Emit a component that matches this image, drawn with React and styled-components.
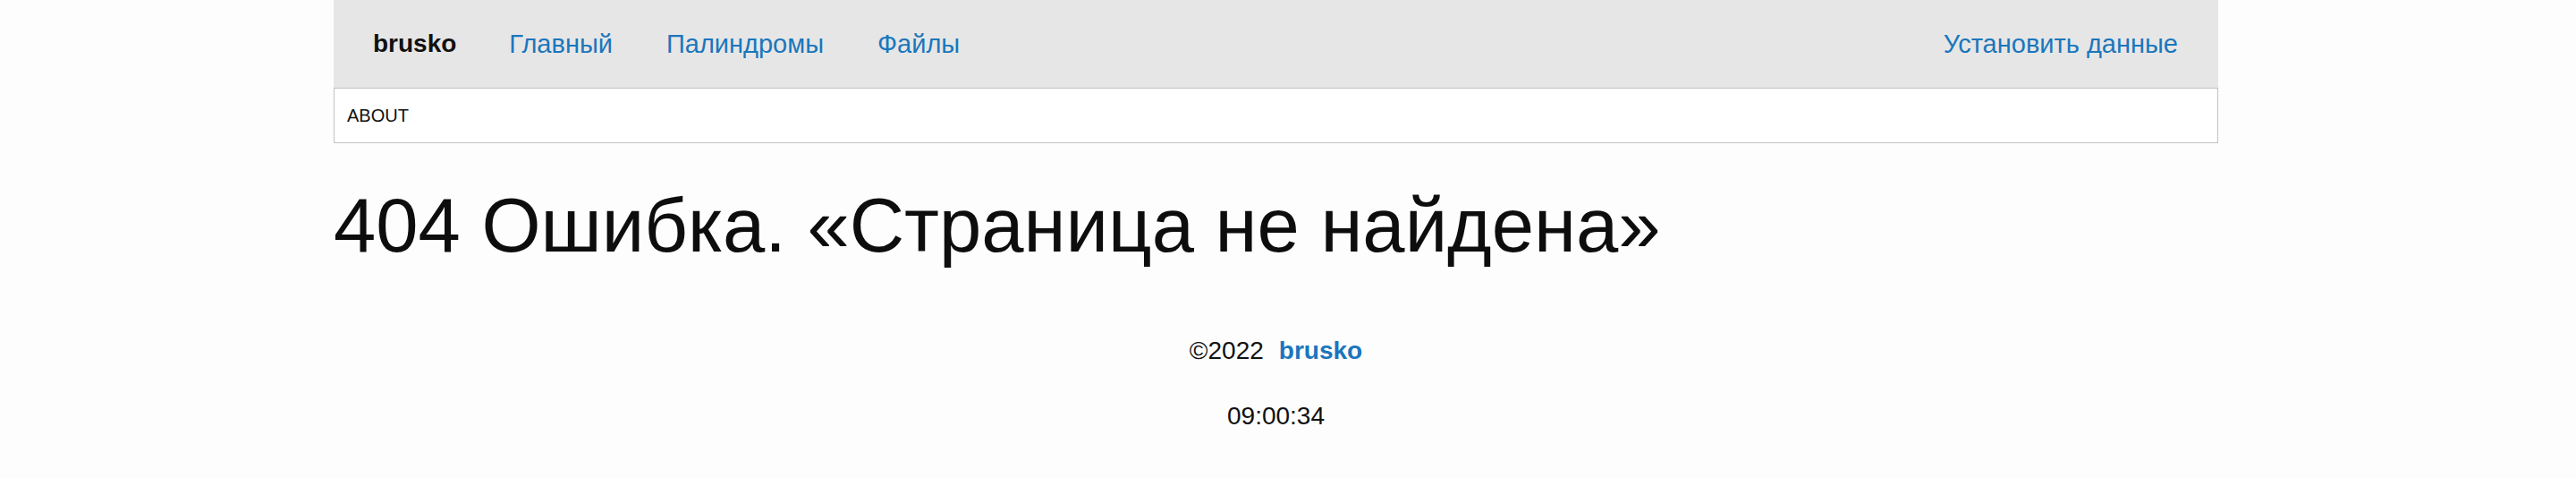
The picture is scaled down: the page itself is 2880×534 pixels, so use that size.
import React from "react";
import styled, { createGlobalStyle } from "styled-components";

const GlobalStyle = createGlobalStyle`
    body {
        margin: 0;
        background: #fdfdfd;
        font-family: "Liberation Sans", Arial, sans-serif;
        color: #111;
    }
`

const Page = styled.div`
    width: 2107px;
    margin-left: 373px;
`
const Navbar = styled.nav`
    height: 98px;
    background: #e6e6e6;
    display: flex;
    align-items: center;
    padding: 0 45px 0 44px;
    box-sizing: border-box;
`
const Brand = styled.a`
    font-size: 28px;
    font-weight: bold;
    color: #111;
    text-decoration: none;
    margin-right: 59px;
`
const NavLink = styled.a`
    font-size: 29px;
    color: #1b76bc;
    text-decoration: none;
    margin-right: ${p => (p.$last ? "0" : "60px")};
    margin-left: ${p => (p.$right ? "auto" : "0")};
`
const SubBar = styled.div`
    height: 62px;
    box-sizing: border-box;
    border: 1px solid #c2c2c2;
    background: #fff;
    display: flex;
    align-items: center;
    padding-left: 14px;
    font-size: 20px;
    text-transform: uppercase;
`
const Title = styled.h1`
    margin: 49px 0 0 0;
    font-size: 85px;
    line-height: 86px;
    font-weight: normal;
    color: #0d0d0d;
`
const Footer = styled.footer`
    margin-top: 83px;
    display: flex;
    flex-direction: column;
    align-items: center;
    gap: 45px;
    font-size: 28px;
    line-height: 28px;
`
const FooterLink = styled.a`
    color: #1b76bc;
    font-weight: bold;
    text-decoration: none;
    margin-left: 17px;
`

export default function App() {
    return (
        <Page>
            <GlobalStyle />
            <Navbar>
                <Brand href="#">brusko</Brand>
                <NavLink href="#">Главный</NavLink>
                <NavLink href="#">Палиндромы</NavLink>
                <NavLink href="#" $last>Файлы</NavLink>
                <NavLink href="#" $right $last>Установить данные</NavLink>
            </Navbar>
            <SubBar>About</SubBar>
            <Title>404 Ошибка. «Страница не найдена»</Title>
            <Footer>
                <div>©2022<FooterLink href="#">brusko</FooterLink></div>
                <div>09:00:34</div>
            </Footer>
        </Page>
    )
}
